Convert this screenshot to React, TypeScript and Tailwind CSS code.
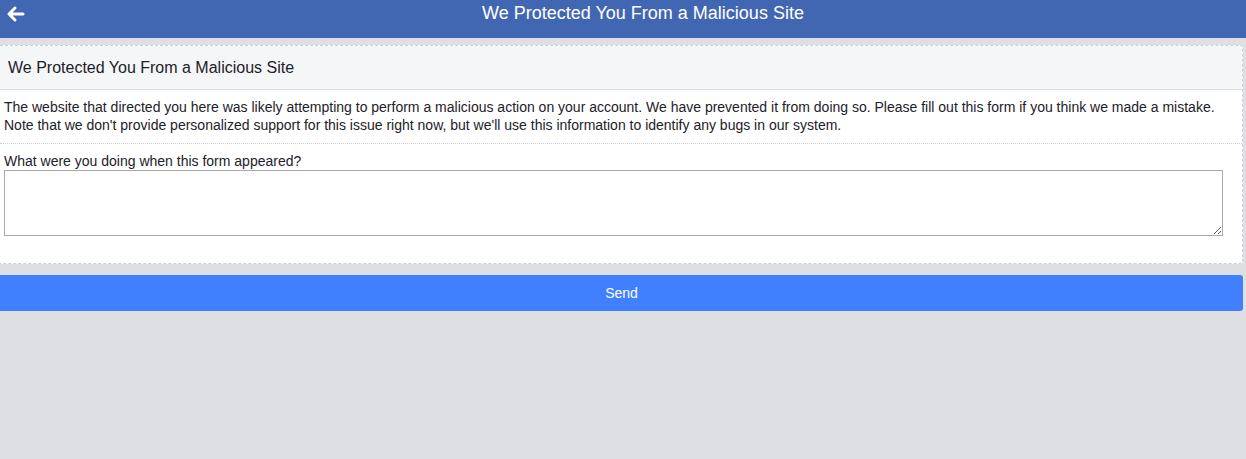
export default function App() {
  return (
    <div className="min-h-[459px] bg-[#dddfe2] font-['Liberation_Sans',Arial,sans-serif] text-[#1d2129]">
      <header className="relative h-[38px] bg-[#4267b2] pl-[40px] pt-[2px] text-center">
        <button className="absolute left-[6px] top-[5px] text-white">
          <svg width="20" height="18" viewBox="0 0 20 18" fill="none" stroke="currentColor" strokeWidth="3" strokeLinecap="round" strokeLinejoin="round">
            <path d="M17 9H3M9 3L3 9l6 6" />
          </svg>
        </button>
        <h1 className="text-[18px] leading-[22px] text-white">We Protected You From a Malicious Site</h1>
      </header>

      <div className="pt-[7px] pr-[3px]">
        <div className="rounded-r-[3px] border border-l-0 border-dashed border-[#ccd0d5] bg-white">
          <div className="flex h-[44px] items-center border-b border-[#dddfe2] bg-[#f5f6f7] px-[8px] text-[16px]">
            We Protected You From a Malicious Site
          </div>
          <p className="border-b border-dotted border-[#ccd0d5] px-[4px] pt-[8px] pb-[9px] text-[14px] leading-[18px]">
            The website that directed you here was likely attempting to perform a malicious action on your account. We have prevented it from doing so. Please fill out this form if you think we made a mistake. Note that we don't provide personalized support for this issue right now, but we'll use this information to identify any bugs in our system.
          </p>
          <div className="px-[4px] pt-[8px] pb-[27px]">
            <label className="block text-[14px] leading-[18px]">What were you doing when this form appeared?</label>
            <textarea className="block h-[66px] w-[1219px] border border-[#a9a9a9] bg-white" />
          </div>
        </div>
      </div>

      <div className="pt-[11px] pr-[3px]">
        <button className="flex h-[36px] w-full items-center justify-center rounded-r-[3px] bg-[#4080ff] text-[14px] text-white">
          Send
        </button>
      </div>
    </div>
  );
}
